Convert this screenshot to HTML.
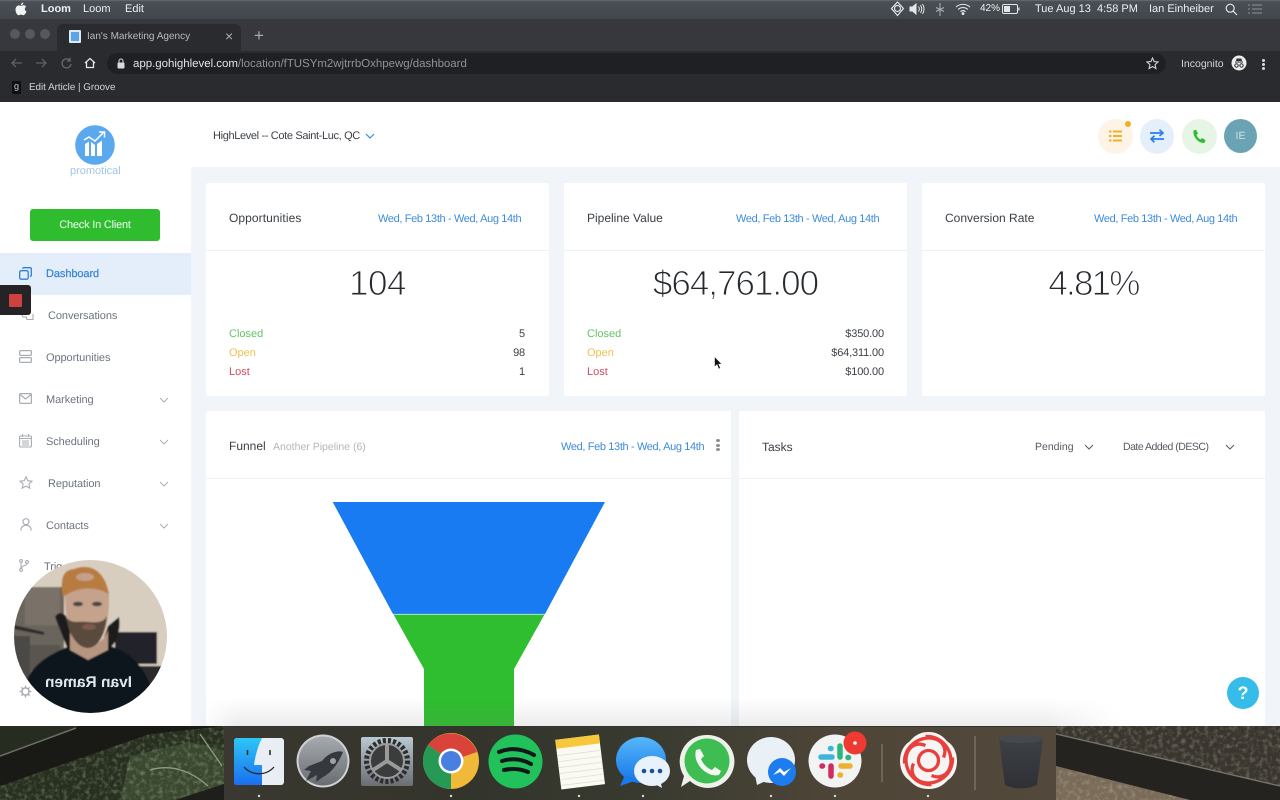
<!DOCTYPE html>
<html lang="en"><head><meta charset="utf-8"><title>Ian's Marketing Agency</title>
<style>
*{box-sizing:border-box}
html,body{margin:0;padding:0;width:1280px;height:800px;overflow:hidden;background:#222;font-family:"Liberation Sans",sans-serif;text-rendering:geometricPrecision}
.a{position:absolute;white-space:nowrap}
.m{color:#eceef0;font-size:11px;top:2px;line-height:14px}
.nav{color:#6c7480;font-size:11px;left:46px;line-height:14px;letter-spacing:-.08px}
.card{position:absolute;background:#fff;border-radius:2px}
.t{font-size:12px;color:#3a3f45;line-height:14px}
.d{font-size:11px;letter-spacing:-.36px;color:#3d8bdc;line-height:14px}
.big{font-size:35px;color:#262a2f;line-height:40px;text-align:center;letter-spacing:-1px;-webkit-text-stroke:1px #fff}
.s{font-size:11px;line-height:14px}
.v{font-size:11px;line-height:14px;color:#3d4248;text-align:right;letter-spacing:-.15px}
</style></head><body>
<div style="position:relative;width:1280px;height:800px;overflow:hidden">

<!-- menubar -->
<div class="a" style="left:0;top:0;width:1280px;height:19px;background:linear-gradient(#6a7077 0,#4a4f56 8%,#42464d 100%)"></div>
<svg class="a" style="left:15px;top:2px" width="12" height="14" viewBox="0 0 12 14"><path d="M8.300 0.500C8.400 1.900 7.200 3.300 5.900 3.200 5.800 1.900 7 0.600 8.300 0.500ZM6 3.900C6.700 3.900 7.500 3.300 8.600 3.300 9.700 3.400 10.600 3.900 11.100 4.700 9.200 5.900 9.500 8.500 11.500 9.400 11 10.900 9.700 13.200 8.400 13.200 7.400 13.200 7.100 12.600 6 12.600 4.900 12.600 4.500 13.200 3.600 13.200 2.200 13.200 0.500 10.200 0.500 7.700 0.500 5.200 2 3.500 3.800 3.400 4.700 3.400 5.400 3.900 6 3.900Z" fill="#f2f3f4"/></svg>
<div class="a m" style="left:41px;font-weight:bold">Loom</div>
<div class="a m" style="left:83px">Loom</div>
<div class="a m" style="left:125px">Edit</div>
<svg class="a" style="left:890px;top:1px" width="15" height="16" viewBox="0 0 15 16" fill="none" stroke="#e4e6e8" stroke-width="1.200"><path d="M7.500 1 13.500 7.500 7.500 14.500 1.500 7.500Z"/><circle cx="7.500" cy="7.500" r="3"/></svg>
<svg class="a" style="left:909px;top:3px" width="17" height="12" viewBox="0 0 17 12" fill="none" stroke="#e4e6e8"><path d="M1 4H3.500L7 1V11L3.500 8H1Z" fill="#e4e6e8"/><path d="M9.500 3.500C10.500 5 10.500 7 9.500 8.500M11.500 2C13 4.500 13 7.500 11.500 10M13.500 1C15.500 4 15.500 8 13.500 11"/></svg>
<svg class="a" style="left:935px;top:3px" width="10" height="13" viewBox="0 0 10 13" fill="none" stroke="#aeb2b6"><path d="M5 0V13M1 4.500 9 8.500M9 4.500 1 8.500"/></svg>
<svg class="a" style="left:955px;top:3px" width="16" height="12" viewBox="0 0 16 12" fill="none" stroke="#e4e6e8" stroke-width="1.100"><path d="M1 4C5 .5 11 .5 15 4M3.200 6.400C6 4 10 4 12.800 6.400M5.400 8.600C7 7.400 9 7.400 10.600 8.600"/><circle cx="8" cy="10.600" r=".9" fill="#e4e6e8"/></svg>
<div class="a m" style="left:980px;font-size:10px">42%</div>
<svg class="a" style="left:1002px;top:4px" width="18" height="10" viewBox="0 0 18 10"><rect x=".5" y=".5" width="15" height="9" rx="1.500" fill="none" stroke="#e4e6e8"/><rect x="2" y="2" width="6" height="6" fill="#e4e6e8"/><rect x="16.300" y="3.500" width="1.200" height="3" fill="#e4e6e8"/></svg>
<div class="a m" style="left:1035px">Tue Aug 13&nbsp; 4:58 PM</div>
<div class="a m" style="left:1149px">Ian Einheiber</div>
<svg class="a" style="left:1225px;top:3px" width="13" height="13" viewBox="0 0 13 13" fill="none" stroke="#e4e6e8" stroke-width="1.200"><circle cx="5.200" cy="5.200" r="4"/><path d="M8.200 8.200 12 12"/></svg>
<svg class="a" style="left:1248px;top:4px" width="14" height="10" viewBox="0 0 14 10" stroke="#8e9297"><path d="M0 1H2M4 1H14M0 5H2M4 5H14M0 9H2M4 9H14"/></svg>

<!-- chrome -->
<div class="a" style="left:0;top:19px;width:1280px;height:32px;background:#36383d"></div>
<div class="a" style="left:10px;top:29px;width:10px;height:10px;border-radius:50%;background:#55585c"></div>
<div class="a" style="left:25px;top:29px;width:10px;height:10px;border-radius:50%;background:#55585c"></div>
<div class="a" style="left:40px;top:29px;width:10px;height:10px;border-radius:50%;background:#55585c"></div>
<div class="a" style="left:57px;top:24px;width:184px;height:27px;border-radius:6px 6px 0 0;background:#292b2e"></div>
<div class="a" style="left:69px;top:30px;width:12px;height:13px;background:#5aa5ea;border:2px solid #dfe9f2;border-radius:1px"></div>
<div class="a" style="left:87px;top:30px;font-size:10px;line-height:14px;color:#b9bcc0">Ian's Marketing Agency</div>
<div class="a" style="left:225px;top:28px;font-size:14px;line-height:16px;color:#aeb1b5">×</div>
<div class="a" style="left:254px;top:27px;font-size:17px;line-height:18px;color:#a6a9ad">+</div>
<div class="a" style="left:0;top:51px;width:1280px;height:51px;background:#292b2e"></div>
<div class="a" style="left:107px;top:53px;width:1059px;height:21px;border-radius:11px;background:#1f2023"></div>
<svg class="a" style="left:9px;top:56px" width="90" height="14" viewBox="0 0 90 14" fill="none" stroke-width="1.300"><path d="M13 7H3M7 3 3 7 7 11" stroke="#5d6064"/><path d="M27 7H37M33 3 37 7 33 11" stroke="#5d6064"/><path d="M61 4.500A4.500 4.500 0 1 0 62 8M61 1.800V5H58" stroke="#66696d"/><path d="M76 7 81 2.500 86 7M77.500 6V11.500H84.500V6" stroke="#e4e6e8"/></svg>
<svg class="a" style="left:117px;top:58px" width="8" height="11" viewBox="0 0 8 11"><rect x="0.500" y="4.500" width="7" height="6" rx="1" fill="#d8dadc"/><path d="M2 5V3a2 2 0 0 1 4 0V5" fill="none" stroke="#d8dadc"/></svg>
<div class="a" style="left:133px;top:57px;font-size:11.500px;line-height:14px;letter-spacing:-.03px;color:#e1e3e5">app.gohighlevel.com<span style="color:#8f9296">/location/fTUSYm2wjtrrbOxhpewg/dashboard</span></div>
<svg class="a" style="left:1146px;top:57px" width="13" height="13" viewBox="0 0 13 13"><path d="M6.500 1 8.100 4.600 12 5 9.100 7.600 9.900 11.500 6.500 9.500 3.100 11.500 3.900 7.600 1 5 4.900 4.600Z" fill="none" stroke="#d0d2d4" stroke-width="1.100"/></svg>
<div class="a" style="left:1181px;top:57px;font-size:10.500px;line-height:14px;color:#d2d4d6">Incognito</div>
<svg class="a" style="left:1231px;top:55px" width="16" height="16" viewBox="0 0 16 16"><circle cx="8" cy="8" r="7.500" fill="#eceded"/><path d="M4 6.500H12V7.500H4ZM5.500 3.500H10.500L11 6H5Z" fill="#333"/><circle cx="5.500" cy="10.500" r="1.700" fill="none" stroke="#333"/><circle cx="10.500" cy="10.500" r="1.700" fill="none" stroke="#333"/></svg>
<div class="a" style="left:1262px;top:59px;width:3px;height:3px;border-radius:50%;background:#d6d8da;box-shadow:0 4px #d6d8da,0 8px #d6d8da"></div>
<div class="a" style="left:12px;top:81px;width:9px;height:13px;background:#0e1012;color:#d0d0d0;font-size:9px;line-height:10px;text-align:center">g</div>
<div class="a" style="left:29px;top:81px;font-size:9.800px;line-height:13px;color:#d4d6d8">Edit Article | Groove</div>

<!-- app -->
<div class="a" style="left:0;top:102px;width:1280px;height:624px;background:#f1f5f9"></div>
<div class="a" style="left:0;top:102px;width:191px;height:624px;background:#fff"></div>
<div class="a" style="left:191px;top:102px;width:1089px;height:65px;background:#fff"></div>
<div class="a" style="left:213px;top:129px;font-size:11px;letter-spacing:-.35px;line-height:14px;color:#3a3f45">HighLevel -- Cote Saint-Luc, QC</div>
<svg class="a" style="left:365px;top:133px" width="10" height="7" viewBox="0 0 10 7" fill="none" stroke="#3d8bdc" stroke-width="1.200"><path d="M1 1 5 5 9 1"/></svg>

<div class="a" style="left:1098px;top:119px;width:35px;height:35px;border-radius:50%;background:#fdf4e6"></div>
<div class="a" style="left:1125px;top:121px;width:6px;height:6px;border-radius:50%;background:#f5ae1d"></div>
<svg class="a" style="left:1109px;top:130px" width="13" height="12" viewBox="0 0 13 12" stroke="#f2b02a" stroke-width="2"><path d="M0 1.500H2.500M4 1.500H13M0 6H2.500M4 6H13M0 10.500H2.500M4 10.500H13"/></svg>
<div class="a" style="left:1140px;top:119px;width:34px;height:35px;border-radius:50%;background:#e5eefb"></div>
<svg class="a" style="left:1150px;top:129px" width="14" height="14" viewBox="0 0 14 14" fill="none" stroke="#2a7fe8" stroke-width="1.700"><path d="M0 4H13M9.500 .8 13 4 9.500 7M14 10H1M4.500 6.800 1 10 4.500 13.200"/></svg>
<div class="a" style="left:1182px;top:119px;width:35px;height:35px;border-radius:50%;background:#e7f5e6"></div>
<svg class="a" style="left:1192px;top:129px" width="14" height="15" viewBox="0 0 14 15"><path d="M1.500 1.500 4 .8 6 4.500 4.500 6C5.200 8 6.500 9.500 8.500 10.500L10 9 13.500 11.300 12.500 13.800C7 14.800 .5 8 1.500 1.500Z" fill="#2fbd2f"/></svg>
<div class="a" style="left:1224px;top:119px;width:33px;height:34px;border-radius:50%;background:#6aa3b3;color:#cfe3e9;font-size:10.500px;line-height:34px;text-align:center">IE</div>

<!-- sidebar -->
<svg class="a" style="left:75px;top:125px" width="40" height="40" viewBox="0 0 40 40"><circle cx="20" cy="20" r="19.800" fill="#5aa8ee"/><path d="M10 19 14 16.500V31H10ZM16 17 20 20V31H16ZM22 19 27 15.500V31H22Z" fill="#fff"/><path d="M9 15 14 12 20 16 28 8M24 7H29.500V12.500" fill="none" stroke="#fff" stroke-width="1.500"/></svg>
<div class="a" style="left:70px;top:165px;font-size:11px;line-height:13px;color:#9fc6e8">promotical</div>
<div class="a" style="left:30px;top:209px;width:130px;height:32px;border-radius:3px;background:#2fbd2f;color:#f2fbf2;font-size:11px;letter-spacing:-.2px;line-height:32px;text-align:center">Check In Client</div>
<div class="a" style="left:0;top:253px;width:191px;height:42px;background:#e4eefb"></div>
<svg class="a" style="left:19px;top:267px" width="13" height="13" viewBox="0 0 13 13" fill="none" stroke="#2a7fdc" stroke-width="1.300"><rect x=".7" y="3.700" width="8.500" height="8.500" rx="1.500"/><path d="M3.700 1.800Q3.700 .7 5 .7H11Q12.300 .7 12.300 2V8Q12.300 9.300 11 9.300"/></svg>
<div class="a nav" style="top:267px;color:#3a86d8;-webkit-text-stroke:.25px #3a86d8">Dashboard</div>
<svg class="a" style="left:20px;top:312px" width="14" height="9" viewBox="0 0 14 9" fill="none" stroke="#a8adb3" stroke-width="1.100"><path d="M1 1 3 5H7M13 2V7.500H7L6 5"/></svg>
<div class="a nav" style="top:309px;left:48px">Conversations</div>
<div class="a nav" style="top:351px">Opportunities</div>
<svg class="a" style="left:19px;top:350px" width="13" height="13" viewBox="0 0 13 13" fill="none" stroke="#a8adb3" stroke-width="1.200"><rect x=".6" y=".6" width="11.800" height="4.800" rx="1"/><rect x=".6" y="7.600" width="11.800" height="4.800" rx="1"/></svg>
<div class="a nav" style="top:393px">Marketing</div>
<svg class="a" style="left:19px;top:393px" width="13" height="11" viewBox="0 0 13 11" fill="none" stroke="#a8adb3" stroke-width="1.200"><rect x=".6" y=".6" width="11.800" height="9.800" rx="1"/><path d="M1 1.500 6.500 6 12 1.500"/></svg>
<div class="a nav" style="top:435px">Scheduling</div>
<svg class="a" style="left:19px;top:434px" width="13" height="14" viewBox="0 0 13 14" fill="none" stroke="#a8adb3" stroke-width="1.100"><rect x=".6" y="2" width="11.800" height="11" rx="1"/><path d="M3.500 0V3M9.500 0V3M.6 4.500H12.400M3 7H10M3 9H10M3 11H10"/></svg>
<div class="a nav" style="top:477px;left:48px">Reputation</div>
<svg class="a" style="left:19px;top:476px" width="14" height="13" viewBox="0 0 14 13" fill="none" stroke="#a8adb3" stroke-width="1.100"><path d="M7 .8 8.800 4.700 13 5.200 9.900 8 10.800 12.200 7 10 3.200 12.200 4.100 8 1 5.200 5.200 4.700Z"/></svg>
<div class="a nav" style="top:519px">Contacts</div>
<svg class="a" style="left:20px;top:518px" width="12" height="13" viewBox="0 0 12 13" fill="none" stroke="#a8adb3" stroke-width="1.200"><circle cx="6" cy="3.700" r="3"/><path d="M.8 12.500C1 9 3 7.300 6 7.300S11 9 11.200 12.500"/></svg>
<div class="a nav" style="top:560px;left:44px">Trig</div>
<svg class="a" style="left:19px;top:559px" width="10" height="13" viewBox="0 0 10 13" fill="none" stroke="#a8adb3" stroke-width="1.100"><circle cx="2" cy="2" r="1.400"/><circle cx="2" cy="11" r="1.400"/><circle cx="8" cy="3" r="1.400"/><path d="M2 3.500V9.500M8 4.500C8 7 2.500 6.500 2 9.500"/></svg>
<svg class="a" style="left:19px;top:685px" width="13" height="13" viewBox="0 0 13 13" fill="none" stroke="#a8adb3"><circle cx="6.500" cy="6.500" r="3.600" stroke-width="1.500"/><path d="M6.500 .5V2.500M6.500 10.500V12.500M.5 6.500H2.500M10.500 6.500H12.500M2.300 2.300 3.700 3.700M9.300 9.300 10.700 10.700M2.300 10.700 3.700 9.300M9.300 3.700 10.700 2.300" stroke-width="1.300"/></svg>
<svg class="a" style="left:159px;top:397px" width="10" height="136" viewBox="0 0 10 136" fill="none" stroke="#a9aeb4"><path d="M1 1 5 5 9 1M1 43 5 47 9 43M1 85 5 89 9 85M1 127 5 131 9 127"/></svg>
<div class="a" style="left:0;top:285px;width:31px;height:30px;border-radius:0 3px 3px 0;background:#252325"></div>
<div class="a" style="left:9px;top:294px;width:13px;height:13px;border-radius:1px;background:#cd4141"></div>

<!-- top cards -->
<div class="card" style="left:206px;top:183px;width:343px;height:213px"></div>
<div class="card" style="left:564px;top:183px;width:343px;height:213px"></div>
<div class="card" style="left:922px;top:183px;width:343px;height:213px"></div>
<div class="a" style="left:206px;top:250px;width:343px;height:1px;background:#eef1f4"></div>
<div class="a" style="left:564px;top:250px;width:343px;height:1px;background:#eef1f4"></div>
<div class="a" style="left:922px;top:250px;width:343px;height:1px;background:#eef1f4"></div>
<div class="a t" style="left:229px;top:211px;letter-spacing:.08px">Opportunities</div>
<div class="a t" style="left:587px;top:211px">Pipeline Value</div>
<div class="a t" style="left:945px;top:211px">Conversion Rate</div>
<div class="a d" style="left:378px;top:212px">Wed, Feb 13th - Wed, Aug 14th</div>
<div class="a d" style="left:736px;top:212px">Wed, Feb 13th - Wed, Aug 14th</div>
<div class="a d" style="left:1094px;top:212px">Wed, Feb 13th - Wed, Aug 14th</div>
<div class="a big" style="left:206px;top:264px;width:343px;letter-spacing:-.5px">104</div>
<div class="a big" style="left:564px;top:264px;width:343px">$64,761.00</div>
<div class="a big" style="left:922px;top:264px;width:343px;letter-spacing:-1.800px">4.81%</div>
<div class="a s" style="left:229px;top:327px;color:#5fc563">Closed</div>
<div class="a s" style="left:229px;top:346px;color:#f0c050">Open</div>
<div class="a s" style="left:229px;top:365px;color:#d3485f">Lost</div>
<div class="a v" style="left:425px;width:100px;top:327px">5</div>
<div class="a v" style="left:425px;width:100px;top:346px">98</div>
<div class="a v" style="left:425px;width:100px;top:365px">1</div>
<div class="a s" style="left:587px;top:327px;color:#5fc563">Closed</div>
<div class="a s" style="left:587px;top:346px;color:#f0c050">Open</div>
<div class="a s" style="left:587px;top:365px;color:#d3485f">Lost</div>
<div class="a v" style="left:784px;width:100px;top:327px">$350.00</div>
<div class="a v" style="left:784px;width:100px;top:346px">$64,311.00</div>
<div class="a v" style="left:784px;width:100px;top:365px">$100.00</div>
<svg class="a" style="left:714px;top:356px" width="9" height="14" viewBox="0 0 9 14"><path d="M.5.500V11L3 8.800 4.700 13 6.500 12.200 4.800 8.200H8Z" fill="#111" stroke="#fff" stroke-width=".6"/></svg>

<!-- bottom cards -->
<div class="card" style="left:206px;top:411px;width:525px;height:315px"></div>
<div class="card" style="left:739px;top:411px;width:526px;height:315px"></div>
<div class="a" style="left:206px;top:478px;width:525px;height:1px;background:#eef1f4"></div>
<div class="a" style="left:739px;top:478px;width:526px;height:1px;background:#eef1f4"></div>
<div class="a t" style="left:229px;top:439px">Funnel</div>
<div class="a" style="left:273px;top:440px;font-size:10.500px;line-height:14px;color:#b3b6ba">Another Pipeline (6)</div>
<div class="a d" style="left:561px;top:440px">Wed, Feb 13th - Wed, Aug 14th</div>
<div class="a" style="left:716px;top:439px;width:4px;height:3px;border-radius:50%;background:#8a8f95;box-shadow:0 5px #8a8f95,0 9px #8a8f95"></div>
<div class="a t" style="left:762px;top:440px">Tasks</div>
<div class="a" style="left:1035px;top:440px;font-size:10.500px;line-height:14px;color:#555b62">Pending</div>
<div class="a" style="left:1123px;top:440px;font-size:10.500px;letter-spacing:-.5px;line-height:14px;color:#555b62">Date Added (DESC)</div>
<svg class="a" style="left:1084px;top:444px" width="10" height="7" viewBox="0 0 10 7" fill="none" stroke="#555b62"><path d="M1 1 5 5 9 1"/></svg>
<svg class="a" style="left:1225px;top:444px" width="10" height="7" viewBox="0 0 10 7" fill="none" stroke="#555b62"><path d="M1 1 5 5 9 1"/></svg>
<svg class="a" style="left:300px;top:490px" width="340" height="236" viewBox="300 490 340 236"><path d="M332.700 502H605L545 614H393Z" fill="#197bf1"/><path d="M393.500 614.500H544.500L514 669V726H424V669Z" fill="#2fbe2f"/><path d="M393 614.300H545" stroke="#c6e9e0" stroke-width=".8"/></svg>
<div class="a" style="left:1227px;top:677px;width:32px;height:32px;border-radius:50%;background:#35bce9;color:#fff;font-size:18px;font-weight:bold;line-height:32px;text-align:center">?</div>
<div class="a" style="left:200px;top:698px;width:920px;height:28px;background:linear-gradient(rgba(120,120,120,0),rgba(120,120,120,.14));-webkit-mask:linear-gradient(90deg,transparent 0,#000 4%,#000 92%,transparent 100%)"></div>

<!-- webcam -->
<svg class="a" style="left:10px;top:556px" width="162" height="162" viewBox="10 556 162 162">
<defs><clipPath id="c"><circle cx="90.500" cy="636.500" r="76.500"/></clipPath><filter id="b" x="-5%" y="-5%" width="110%" height="110%"><feGaussianBlur stdDeviation=".9"/></filter></defs>
<g clip-path="url(#c)">
<g filter="url(#b)">
<rect x="10" y="556" width="162" height="162" fill="#d8cebf"/>
<path d="M10 587H64V680H10Z" fill="#6b655c"/>
<path d="M25 587H60V625H25Z" fill="#7a7268"/>
<path d="M14 625 44 632 44 635 14 629Z" fill="#2d2b29"/>
<path d="M14 636H30V680H14Z" fill="#4c4845"/>
<path d="M30 645H60V670H30Z" fill="#5a5650"/>
<path d="M115 632H157V664H115Z" fill="#22232a"/>
<path d="M140 666H170V700H140Z" fill="#2a2a2c"/>
<path d="M55 617C58 612 62 612 66 616L76 650H100L108 626 119 617C121 625 118 640 112 646L96 665H74Z" fill="#1b1a1c"/>
<path d="M24 690C28 668 44 656 72 645L88 642 106 645C128 650 146 665 153 695L150 722H24Z" fill="#10131b"/>
<path d="M70 632C76 650 102 650 108 630L108 650 88 660 70 650Z" fill="#b69680"/>
<path d="M65 598C63 584 74 578 88 578S110 584 109 600C109 625 102 648 87 648 72 648 66 625 65 598Z" fill="#c4a28b"/>
<path d="M67 618C70 640 80 648 88 648S105 638 107 616C104 622 98 623 88 622S72 624 67 618Z" fill="#5a4a3d"/>
<ellipse cx="89" cy="627" rx="7" ry="3" fill="#7d5a4e"/>
<path d="M63 597C60 580 62 570 74 569 86 564 104 566 109 594 96 586 78 586 63 597Z" fill="#b87b3f"/>
<ellipse cx="85" cy="577" rx="9" ry="4" fill="#c5a08a"/>
<ellipse cx="78" cy="604" rx="5" ry="2.300" fill="#4c4747"/><ellipse cx="97" cy="604" rx="5" ry="2.300" fill="#4c4747"/>
</g>
<text transform="translate(132,687) scale(-1,1)" font-family="Liberation Sans,sans-serif" font-weight="bold" font-size="15.500" fill="#dfe8f0">Ivan Ramen</text>
</g></svg>

<!-- wallpaper -->
<svg class="a" style="left:0;top:726px" width="1280" height="74" viewBox="0 0 1280 74">
<defs>
<filter id="n" x="0" y="0" width="100%" height="100%"><feTurbulence type="fractalNoise" baseFrequency=".22" numOctaves="3" seed="4"/><feColorMatrix values="0 0 0 0 .78  0 0 0 0 .82  0 0 0 0 .68  2.200 0 0 0 -1"/></filter>
<clipPath id="fo"><path d="M0 60 150 8 224 0V74H0Z"/></clipPath>
<clipPath id="ro"><path d="M1056 40 1190 74H1056ZM1056 0H1280V60L1056 8Z"/></clipPath>
</defs>
<rect width="1280" height="74" fill="#191a16"/>
<path d="M0 0H80L0 30Z" fill="#262c20"/>
<path d="M0 60 150 8 224 0V74H0Z" fill="#27301f"/>
<path d="M120 74 130 30 190 16 224 24V74Z" fill="#39482f"/>
<rect width="224" height="74" filter="url(#n)" clip-path="url(#fo)" opacity=".32"/>
<path d="M150 44C170 38 190 44 208 60M200 8 222 40" stroke="#8f9c7c" stroke-width="1.300" fill="none"/>
<path d="M175 74 224 58V74Z" fill="#1e1e1b"/>
<path d="M0 30 76 2" stroke="#6c6c60" stroke-width="1.500"/>
<rect x="1056" width="224" height="74" fill="#24231f"/>
<path d="M1056 0H1280V60L1056 8Z" fill="#3a362f"/>
<path d="M1056 40 1190 74H1056Z" fill="#7a6a58"/>
<rect x="1056" width="224" height="74" filter="url(#n)" clip-path="url(#ro)" opacity=".3"/>
<path d="M1056 8 1280 60" stroke="#77756b" stroke-width="1.300"/>
</svg>

<!-- dock -->
<div class="a" style="left:224px;top:726px;width:832px;height:74px;background:linear-gradient(90deg,#3a3830 0,#33342b 30%,#383a30 50%,#4f4638 75%,#52483b 100%);border-top:1px solid #333"></div>
<svg class="a" style="left:224px;top:726px" width="832" height="74" viewBox="224 726 832 74">
<defs>
<linearGradient id="fl" x1="0" y1="0" x2="0" y2="1"><stop offset="0" stop-color="#2dc6f5"/><stop offset="1" stop-color="#1a6ff0"/></linearGradient>
<linearGradient id="rk" x1="0" y1="0" x2="0" y2="1"><stop offset="0" stop-color="#a6abaf"/><stop offset="1" stop-color="#696d71"/></linearGradient>
<linearGradient id="sys" x1="0" y1="0" x2="0" y2="1"><stop offset="0" stop-color="#b9c8d2"/><stop offset="1" stop-color="#6a6e72"/></linearGradient>
<linearGradient id="ms" x1="0" y1="0" x2="0" y2="1"><stop offset="0" stop-color="#56b6fa"/><stop offset="1" stop-color="#1577e8"/></linearGradient>
<linearGradient id="tr" x1="0" y1="0" x2="0" y2="1"><stop offset="0" stop-color="#3e4146"/><stop offset="1" stop-color="#2e3035"/></linearGradient>
</defs>
<!-- finder -->
<rect x="234" y="738" width="50" height="47" rx="3" fill="#e9eef5"/>
<path d="M237 738H262C257 748 255 758 254 765H262V785H237Q234 785 234 782V741Q234 738 237 738Z" fill="url(#fl)"/>
<path d="M247.500 750V755M270 750V755" stroke="#222" stroke-width="1.500"/>
<path d="M244 767C252 776 266 776 274 767" stroke="#222" stroke-width="1.300" fill="none"/>
<!-- launchpad -->
<circle cx="323" cy="761" r="26.500" fill="#cfd2d4"/><circle cx="323" cy="761" r="24.500" fill="url(#rk)"/>
<path d="M343 752C338 750 328 753 322 761L309 766 304 770 311 771 306 781 317 775 316 782 323 777C333 772 340 760 343 752Z" fill="#35383d"/><circle cx="333" cy="761" r="3" fill="#9ea3a7"/>
<!-- sysprefs -->
<rect x="361" y="737" width="52" height="49" rx="2" fill="url(#sys)"/>
<circle cx="387" cy="761" r="20" fill="none" stroke="#2c2d2e" stroke-width="6" stroke-dasharray="3 2"/><circle cx="387" cy="761" r="17" fill="#3b3c3e" stroke="#9c9c9a" stroke-width="2"/>
<path d="M387 761V745M387 761 373 770M387 761 401 770" stroke="#9a9a98" stroke-width="4"/>
<!-- chrome -->
<circle cx="451" cy="761" r="28" fill="#f0b93a"/>
<path d="M451 761 428 745A28 28 0 0 1 477 752Z" fill="#d9433a"/>
<path d="M451 761 428 745A28 28 0 0 0 451 789Z" fill="#269a54"/>
<circle cx="451" cy="761" r="12.500" fill="#fff"/><circle cx="451" cy="761" r="10" fill="#4a7fe2"/>
<!-- spotify -->
<circle cx="515.500" cy="761.500" r="27" fill="#21c25c"/>
<path d="M499 752C511 747 523 749 534 755M502 761C512 758 522 759 531 764M504 770C513 768 521 769 528 772" stroke="#12171a" stroke-width="4" stroke-linecap="round" fill="none"/>
<!-- notes -->
<g transform="rotate(-7 580 761)"><rect x="558" y="737" width="44" height="50" fill="#faf9f2"/><rect x="558" y="737" width="44" height="9" fill="#f7c83c"/><path d="M558 753H602M558 759H602M558 765H602M558 771H602M558 777H602M558 783H602" stroke="#dcdcd6" stroke-width=".7"/></g>
<!-- messages -->
<ellipse cx="641" cy="760" rx="25" ry="23" fill="url(#ms)"/><path d="M625 775 620 786 637 780Z" fill="#1a7be8"/>
<ellipse cx="652" cy="771" rx="18" ry="15" fill="#e7f2fb"/><path d="M655 784 662 788 660 780Z" fill="#e7f2fb"/>
<circle cx="644" cy="771" r="2.300" fill="#1a4f9e"/><circle cx="652" cy="771" r="2.300" fill="#1a4f9e"/><circle cx="660" cy="771" r="2.300" fill="#1a4f9e"/>
<!-- whatsapp -->
<path d="M707 735A26.500 26.500 0 1 1 690 781L681 787 684 776A26.500 26.500 0 0 1 707 735Z" fill="#ecf2ea"/>
<circle cx="707" cy="761" r="22.500" fill="#3dbd52"/>
<path d="M696 750 700 749 704 756 701 759C703 764 707 768 712 770L715 767 721 771 719 775C708 778 692 764 696 750Z" fill="#f4f7f2"/>
<!-- messenger -->
<ellipse cx="771" cy="760" rx="24" ry="23" fill="#e9f1f7"/><path d="M755 775 757 785 768 780Z" fill="#e9f1f7"/>
<circle cx="782" cy="772" r="14" fill="#1d7df0"/><path d="M773 775 780 768 784 772 791 768 784 776 780 772Z" fill="#fff"/>
<!-- slack -->
<circle cx="835" cy="761" r="26.500" fill="#f2f3f3"/>
<g fill="none" stroke-linecap="round" stroke-width="5.500"><path d="M821 757H832" stroke="#3db4dc"/><path d="M830.500 748.500H831" stroke="#3db4dc"/><path d="M840 746V757" stroke="#2cb67d"/><path d="M848 757.500H848.500" stroke="#2cb67d"/><path d="M841 766H850" stroke="#ecb22e"/><path d="M840 775H840.500" stroke="#ecb22e"/><path d="M831 766V776" stroke="#d12b5f"/><path d="M822 766H822.500" stroke="#d12b5f"/></g>
<circle cx="855" cy="743" r="11.500" fill="#ee3a33"/><circle cx="855" cy="743" r="1.800" fill="#fff"/>
<path d="M882 744V782M975 736V790" stroke="#8a8578" stroke-width="1"/>
<!-- spiral app -->
<path d="M928.500 732C940 732 945 739 948 742 953 745 957 752 957 761 957 770 953 777 948 780 945 783 940 789 928.500 789 917 789 912 783 909 780 904 777 900 770 900 761 900 752 904 745 909 742 912 739 917 732 928.500 732Z" fill="#f6f5f3"/>
<g transform="translate(928.500 760.500)" fill="none" stroke="#e8413d" stroke-width="3.300">
<circle r="10"/>
<path d="M-24 3C-25 -14 -9 -25 5 -22C14 -20 19 -12 15 -3"/>
<path d="M-24 3C-25 -14 -9 -25 5 -22C14 -20 19 -12 15 -3" transform="rotate(90)"/>
<path d="M-24 3C-25 -14 -9 -25 5 -22C14 -20 19 -12 15 -3" transform="rotate(180)"/>
<path d="M-24 3C-25 -14 -9 -25 5 -22C14 -20 19 -12 15 -3" transform="rotate(270)"/>
</g>
<!-- trash -->
<path d="M999 739Q1021 733 1043 739L1037 785Q1021 792 1005 785Z" fill="url(#tr)"/><ellipse cx="1021" cy="739" rx="22" ry="4" fill="#45484d"/>
<g fill="#d8d8d4"><circle cx="259" cy="796" r="1.200"/><circle cx="451" cy="796" r="1.200"/><circle cx="579" cy="796" r="1.200"/><circle cx="643" cy="796" r="1.200"/><circle cx="771" cy="796" r="1.200"/><circle cx="835" cy="796" r="1.200"/><circle cx="928" cy="796" r="1.200"/></g>
</svg>
</div>
</body></html>
